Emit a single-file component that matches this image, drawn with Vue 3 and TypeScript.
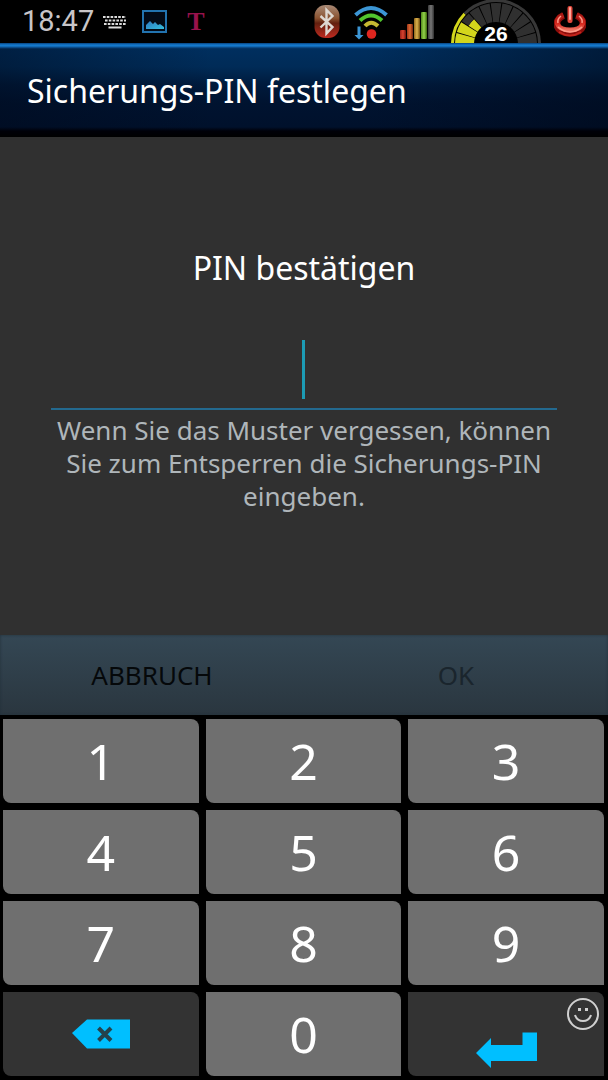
<script setup lang="ts">
import { ref } from 'vue'

interface Segment {
  d: string
  fill: string
}

const pin = ref('')
const digits: string[] = ['1', '2', '3', '4', '5', '6', '7', '8', '9']

function press(digit: string): void {
  pin.value += digit
}

function erase(): void {
  pin.value = pin.value.slice(0, -1)
}

function reset(): void {
  pin.value = ''
}

function wedge(inner: number, outer: number, from: number, to: number): string {
  const point = (r: number, deg: number): string => {
    const a = (deg * Math.PI) / 180
    return `${(46 - r * Math.cos(a)).toFixed(2)} ${(44 - r * Math.sin(a)).toFixed(2)}`
  }
  return `M${point(inner, from)}L${point(outer, from)}A${outer} ${outer} 0 0 1 ${point(outer, to)}L${point(inner, to)}A${inner} ${inner} 0 0 0 ${point(inner, from)}Z`
}

const segments: Segment[] = [
  { d: wedge(42, 45, 1, 44), fill: '#d3d61c' },
  { d: wedge(42, 45, 44, 179), fill: '#383838' },
]
for (let i = 0; i < 11; i++) {
  const from = (i * 180) / 11 + 0.8
  const to = ((i + 1) * 180) / 11 - 0.8
  if (i === 2) {
    segments.push({ d: wedge(22, 33, from, to), fill: '#d3d61c' })
    segments.push({ d: wedge(33, 41, from, to), fill: '#303030' })
  } else {
    segments.push({ d: wedge(22, 41, from, to), fill: i < 2 ? '#d3d61c' : '#303030' })
  }
}
</script>

<template>
  <div class="screen">
    <header class="status">
      <time class="clock">18:47</time>
      <svg class="keyboard" width="24" height="14" viewBox="0 0 24 14" aria-hidden="true">
        <g stroke="#dcdcdc" stroke-width="2" fill="none">
          <path d="M0 2H23M1 9H23" stroke-dasharray="2.600 1.200" />
          <path d="M2 5.500H23" stroke-dasharray="2.600 1.200" />
          <path d="M5.500 12.500H18.500" />
        </g>
      </svg>
      <svg class="picture" width="26" height="24" viewBox="0 0 26 24" aria-hidden="true">
        <defs>
          <linearGradient id="hill" x1="0" y1="0" x2="1" y2="1">
            <stop offset="0" stop-color="#2d77bd" />
            <stop offset="1" stop-color="#35bfe0" />
          </linearGradient>
        </defs>
        <rect x="1" y="1" width="23" height="21" fill="#020a16" stroke="#2273af" stroke-width="2" />
        <path d="M4 19V15L8 11L11 14L13 12L16 15L18 14L22 17V19Z" fill="url(#hill)" />
      </svg>
      <span class="carrier">T</span>
      <span class="spacer"></span>
      <svg class="bluetooth" width="26" height="36" viewBox="0 0 26 36" aria-hidden="true">
        <defs>
          <linearGradient id="bt" x1="0" y1="0" x2="0" y2="1">
            <stop offset="0" stop-color="#a88a76" />
            <stop offset="0.400" stop-color="#8a5230" />
            <stop offset="0.550" stop-color="#62200f" />
            <stop offset="1" stop-color="#c02a20" />
          </linearGradient>
        </defs>
        <rect x="0.500" y="1" width="25" height="33" rx="11" fill="url(#bt)" />
        <path d="M6.500 12L18.500 23L12.500 29.500V6L18.500 12L6.500 23.500" fill="none" stroke="#ded8d2" stroke-width="2.400" />
      </svg>
      <svg class="wifi" width="34" height="36" viewBox="0 0 34 36" aria-hidden="true">
        <g fill="none" stroke-width="4">
          <path d="M1.500 11Q17 -3 32.500 11" stroke="#3c96d5" />
          <path d="M6 16.500Q17 6.500 28 16.500" stroke="#52c52e" />
          <path d="M11 22Q17 15.500 24 22" stroke="#c5b832" />
        </g>
        <circle cx="17.500" cy="30" r="4.800" fill="#df261f" />
        <path d="M3.500 22.500H6.500V31H9.500L5 35.500L0.500 31H3.500Z" fill="#3c96d5" />
      </svg>
      <svg class="signal" width="35" height="34" viewBox="0 0 35 34" aria-hidden="true">
        <defs>
          <linearGradient id="s1" x1="0" x2="1"><stop offset="0" stop-color="#9a2018" /><stop offset="0.500" stop-color="#d8442f" /><stop offset="1" stop-color="#6f110c" /></linearGradient>
          <linearGradient id="s2" x1="0" x2="1"><stop offset="0" stop-color="#a0361a" /><stop offset="0.500" stop-color="#dd6a32" /><stop offset="1" stop-color="#74230d" /></linearGradient>
          <linearGradient id="s3" x1="0" x2="1"><stop offset="0" stop-color="#92681e" /><stop offset="0.500" stop-color="#dcb14c" /><stop offset="1" stop-color="#6c4a0c" /></linearGradient>
          <linearGradient id="s4" x1="0" x2="1"><stop offset="0" stop-color="#52881c" /><stop offset="0.500" stop-color="#94d44a" /><stop offset="1" stop-color="#3c640d" /></linearGradient>
          <linearGradient id="s5" x1="0" x2="1"><stop offset="0" stop-color="#3a3a3a" /><stop offset="0.500" stop-color="#777" /><stop offset="1" stop-color="#303030" /></linearGradient>
        </defs>
        <rect x="0" y="25" width="6" height="9" rx="1" fill="url(#s1)" />
        <rect x="7" y="19" width="6" height="15" rx="1" fill="url(#s2)" />
        <rect x="14" y="13" width="6" height="21" rx="1" fill="url(#s3)" />
        <rect x="21" y="7" width="6" height="27" rx="1" fill="url(#s4)" />
        <rect x="28" y="0" width="6" height="34" rx="1" fill="url(#s5)" />
      </svg>
      <div class="gauge">
        <svg width="92" height="43" viewBox="0 0 92 43" aria-hidden="true">
          <path v-for="(s, i) in segments" :key="i" :d="s.d" :fill="s.fill" />
        </svg>
        <span class="level">26</span>
      </div>
      <svg class="power" width="32" height="32" viewBox="0 0 32 32" aria-hidden="true">
        <defs>
          <linearGradient id="pw" x1="0" y1="0" x2="0" y2="1">
            <stop offset="0" stop-color="#a81a14" />
            <stop offset="0.600" stop-color="#d92a20" />
            <stop offset="1" stop-color="#f07a68" />
          </linearGradient>
        </defs>
        <path d="M9.500 9.500C-1 14 1 27 16 27C31 27 33 14 22.500 9.500" fill="none" stroke="#8c0d0b" stroke-width="7" />
        <path d="M9.500 9C-1 13 2 24 16 24C30 24 33 13 22.500 9" fill="none" stroke="url(#pw)" stroke-width="5" />
        <path d="M4 21Q16 31 28 21M7 10Q3 13 4 17M25 10Q29 13 28 17" fill="none" stroke="#ff9d8c" stroke-width="1.500" />
        <path d="M5 26Q16 33 27 26" fill="none" stroke="#c2261d" stroke-width="2" />
        <rect x="13.500" y="0" width="5" height="17" rx="2" fill="#e0483c" />
        <rect x="15" y="1" width="2" height="13" rx="1" fill="#ffa598" />
      </svg>
    </header>

    <div class="titlebar">
      <h1>Sicherungs-PIN festlegen</h1>
    </div>

    <main class="content">
      <label class="prompt" for="pin">PIN bestätigen</label>
      <div class="field">
        <input id="pin" v-model="pin" type="password" inputmode="numeric" autocomplete="off" aria-describedby="hint" />
        <span v-if="!pin" class="caret"></span>
      </div>
      <p id="hint" class="hint">Wenn Sie das Muster vergessen, können Sie zum Entsperren die Sicherungs-PIN eingeben.</p>
    </main>

    <div class="actions">
      <button type="button" @click="reset">ABBRUCH</button>
      <button type="button" :disabled="pin.length < 4">OK</button>
    </div>

    <div class="keypad">
      <button v-for="d in digits" :key="d" type="button" class="key" @click="press(d)">{{ d }}</button>
      <button type="button" class="key dark" aria-label="Löschen" @click="erase">
        <svg width="58" height="30" viewBox="0 0 58 30" aria-hidden="true">
          <path d="M0 14L15 0.500H58V29.500H15Z" fill="#00bfff" />
          <path d="M26.500 9L39 21.500M39 9L26.500 21.500" stroke="#24424c" stroke-width="4" />
        </svg>
      </button>
      <button type="button" class="key" @click="press('0')">0</button>
      <button type="button" class="key dark enter" aria-label="Eingabe">
        <svg width="61" height="36" viewBox="0 0 61 36" aria-hidden="true">
          <path d="M0 21L15 6V13H46.500V0.500H61V29H15V36Z" fill="#00bfff" />
        </svg>
        <svg class="smiley" width="34" height="34" viewBox="0 0 34 34" aria-hidden="true">
          <circle cx="17" cy="17" r="15" fill="none" stroke="#d0d0d0" stroke-width="2" />
          <path d="M9 18Q11 24 17 24Q23 24 25 18" fill="none" stroke="#d0d0d0" stroke-width="2" />
          <rect x="12" y="11" width="3" height="3" fill="#d0d0d0" />
          <rect x="19" y="11" width="3" height="3" fill="#d0d0d0" />
        </svg>
      </button>
    </div>
  </div>
</template>

<style>
body {
  margin: 0;
  background: #000;
}
</style>

<style scoped>
.screen {
  box-sizing: border-box;
  min-height: 100vh;
  display: flex;
  flex-direction: column;
  background: #000;
  color: #fff;
  font-family: "Noto Sans", "Open Sans", sans-serif;
}

button {
  border: 0;
  margin: 0;
  padding: 0;
  font-family: inherit;
}

.status {
  display: flex;
  align-items: center;
  height: 43px;
  padding: 0 22px;
}

.status svg {
  flex: none;
  display: block;
}

.clock {
  font-family: Roboto, sans-serif;
  font-size: 29px;
  line-height: 43px;
  color: #c8c5c8;
}

.keyboard {
  margin-left: 9px;
}

.picture {
  margin-left: 15px;
}

.carrier {
  margin-left: 19px;
  font-family: "Liberation Serif", serif;
  font-weight: bold;
  font-size: 26px;
  line-height: 43px;
  color: #97124c;
}

.spacer {
  flex: 1;
}

.wifi {
  margin-left: 14px;
}

.signal {
  margin-left: 12px;
}

.gauge {
  position: relative;
  align-self: flex-end;
  margin-left: 15px;
}

.level {
  position: absolute;
  left: 0;
  right: 0;
  bottom: 0;
  text-align: center;
  font-family: "Liberation Sans", sans-serif;
  font-weight: bold;
  font-size: 21px;
  line-height: 19px;
}

.power {
  margin-left: 12px;
}

.titlebar {
  box-sizing: border-box;
  display: flex;
  align-items: center;
  height: 94px;
  padding: 2px 27px 0;
  background:
    linear-gradient(180deg, #06427f 0, #1579cc 2px, #1579cc 3px, #063a70 5px, transparent 6px),
    linear-gradient(180deg, transparent 84px, #000008 88px, #000 100%),
    linear-gradient(90deg, rgba(0, 8, 24, 0.4), transparent 35%, transparent 60%, rgba(0, 8, 24, 0.5)),
    linear-gradient(180deg, #003061 0, #002b57 24px, #001a3c 42px, #001330 60px, #00102a 100%);
}

h1 {
  margin: 0;
  font-size: 32px;
  line-height: 48px;
  font-weight: 400;
}

.content {
  flex: 1;
  display: flex;
  flex-direction: column;
  padding: 107px 51px 24px;
  background: #303030;
  text-align: center;
}

.prompt {
  font-size: 32px;
  line-height: 48px;
}

.field {
  position: relative;
  margin-top: 40px;
}

input {
  box-sizing: border-box;
  display: block;
  width: 100%;
  height: 78px;
  padding: 0;
  border: 0;
  border-bottom: 2px solid #23698f;
  outline: none;
  background: transparent;
  color: #fff;
  caret-color: transparent;
  font-size: 48px;
  text-align: center;
}

.caret {
  position: absolute;
  left: calc(50% - 2px);
  top: 8px;
  width: 3px;
  height: 59px;
  background: #1c9bb4;
}

.hint {
  margin: 4px 0 0;
  font-size: 26px;
  line-height: 33px;
  color: #afb6ba;
}

.actions {
  display: grid;
  grid-template-columns: 1fr 1fr;
  height: 80px;
  background: linear-gradient(180deg, #344754, #2a363f);
  box-shadow: inset 0 0 3px #22313b;
}

.actions button {
  background: transparent;
  font-size: 26px;
  color: #05080a;
}

.actions button:disabled {
  color: #1a252d;
}

.keypad {
  display: grid;
  grid-template-columns: repeat(3, 1fr);
  grid-auto-rows: 84px;
  gap: 7px;
  padding: 4px 4px 4px 3px;
}

.key {
  position: relative;
  display: flex;
  align-items: center;
  justify-content: center;
  border-radius: 0 8px 0 8px;
  background: #6f6f6f;
  color: #fff;
  font-size: 50px;
  line-height: 68px;
  font-weight: 400;
}

.dark {
  background: #333;
}

.enter {
  align-items: flex-end;
  box-sizing: border-box;
  padding-bottom: 8px;
}

.smiley {
  position: absolute;
  top: 5px;
  right: 4px;
}
</style>
